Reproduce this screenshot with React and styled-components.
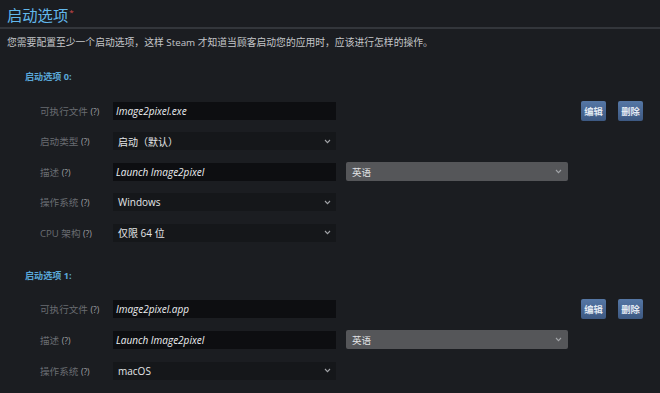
import React from "react";
import styled, { createGlobalStyle } from "styled-components";

const GlobalStyle = createGlobalStyle`
  body {
    margin: 0;
    background: #1b1d21;
    font-family: "Open Sans", "Noto Sans CJK SC", sans-serif;
  }
`;

const launchOptions = [
  {
    rows: [
      { label: "可执行文件", type: "input", value: "Image2pixel.exe", actions: true },
      { label: "启动类型", type: "select", value: "启动（默认）" },
      { label: "描述", type: "input", value: "Launch Image2pixel", lang: "英语" },
      { label: "操作系统", type: "select", value: "Windows" },
      { label: "CPU 架构", type: "select", value: "仅限 64 位" },
    ],
  },
  {
    rows: [
      { label: "可执行文件", type: "input", value: "Image2pixel.app", actions: true },
      { label: "描述", type: "input", value: "Launch Image2pixel", lang: "英语" },
      { label: "操作系统", type: "select", value: "macOS" },
    ],
  },
];

function Chevron() {
  return (
    <svg width="7" height="5" viewBox="0 0 7 5">
      <polyline
        points="1,1 3.5,3.6 6,1"
        fill="none"
        stroke="#a2a4a8"
        strokeWidth="1.1"
      />
    </svg>
  );
}

function App() {
  return (
    <>
      <GlobalStyle />
      <Page>
        <TitleBar>
          <Title>
            启动选项<Required>*</Required>
          </Title>
        </TitleBar>
        <Description>
          您需要配置至少一个启动选项，这样 Steam 才知道当顾客启动您的应用时，应该进行怎样的操作。
        </Description>

        {launchOptions.map((opt, i) => (
          <Section key={i} $first={i === 0}>
            <SectionTitle>启动选项 {i}:</SectionTitle>
            <Rows>
              {opt.rows.map((row, j) => (
                <Row key={j}>
                  <Label>
                    {row.label} <Help>(?)</Help>
                  </Label>
                  {row.type === "input" ? (
                    <TextField>{row.value}</TextField>
                  ) : (
                    <SelectField>
                      <span>{row.value}</span>
                      <Chevron />
                    </SelectField>
                  )}
                  {row.lang && (
                    <LangSelect>
                      <span>{row.lang}</span>
                      <Chevron />
                    </LangSelect>
                  )}
                  {row.actions && (
                    <Actions>
                      <Button>编辑</Button>
                      <Button>删除</Button>
                    </Actions>
                  )}
                </Row>
              ))}
            </Rows>
          </Section>
        ))}
      </Page>
    </>
  );
}

export default App;

const Page = styled.div`
  width: 660px;
  height: 393px;
  overflow: hidden;
`;

const TitleBar = styled.div`
  padding: 4px 7px 0;
  border-bottom: 2px solid #33363b;
`;

const Title = styled.h1`
  margin: 0;
  height: 23px;
  font-size: 15.3px;
  font-weight: 400;
  line-height: 23px;
  color: #62b8ec;
`;

const Required = styled.span`
  display: inline-block;
  line-height: 0;
  color: #d24a4a;
  font-size: 8px;
  margin-left: 1px;
  vertical-align: top;
  position: relative;
  top: 8px;
`;

const Description = styled.p`
  margin: 7px 0 0;
  padding: 0 7px;
  font-size: 9.8px;
  line-height: 14px;
  color: #c4c6c9;
  white-space: nowrap;
`;

const Section = styled.section`
  margin-top: ${(p) => (p.$first ? "20px" : "27px")};
  padding-left: 25px;
`;

const SectionTitle = styled.h3`
  margin: 0;
  font-size: 9.1px;
  font-weight: 700;
  line-height: 14px;
  color: #5aa8d9;
`;

const Rows = styled.div`
  display: flex;
  flex-direction: column;
  gap: 12.6px;
  margin-top: 17.5px;
  padding-left: 15px;
`;

const Row = styled.div`
  display: flex;
  align-items: center;
  height: 18px;
`;

const Label = styled.div`
  width: 73px;
  flex-shrink: 0;
  font-size: 9.6px;
  color: #696c71;
  white-space: nowrap;
`;

const Help = styled.span`
  color: #a0a3a7;
  font-size: 8.6px;
`;

const TextField = styled.div`
  box-sizing: border-box;
  width: 223px;
  height: 18px;
  padding: 0 3px;
  display: flex;
  align-items: center;
  background: #0d0e11;
  color: #eef0f2;
  font-size: 10px;
  font-style: italic;
  font-weight: 500;
`;

const SelectField = styled.div`
  box-sizing: border-box;
  width: 223px;
  height: 18px;
  padding: 0 5px;
  display: flex;
  align-items: center;
  justify-content: space-between;
  background: #15171a;
  color: #e4e6e8;
  font-size: 10px;
  font-weight: 400;
`;

const LangSelect = styled(SelectField)`
  width: 222px;
  height: 19px;
  margin-left: 10px;
  padding: 0 6px 0 6px;
  background: #555659;
  color: #e2e3e5;
  font-size: 9.5px;
  border-radius: 2px;
`;

const Actions = styled.div`
  margin-left: auto;
  display: flex;
  gap: 12px;
  padding-right: 17px;
`;

const Button = styled.div`
  box-sizing: border-box;
  width: 25px;
  height: 20px;
  display: flex;
  align-items: center;
  justify-content: center;
  background: linear-gradient(#5577a5, #3d5982);
  border-radius: 2px;
  color: #e3eaf3;
  font-size: 9.3px;
  font-weight: 700;
`;
